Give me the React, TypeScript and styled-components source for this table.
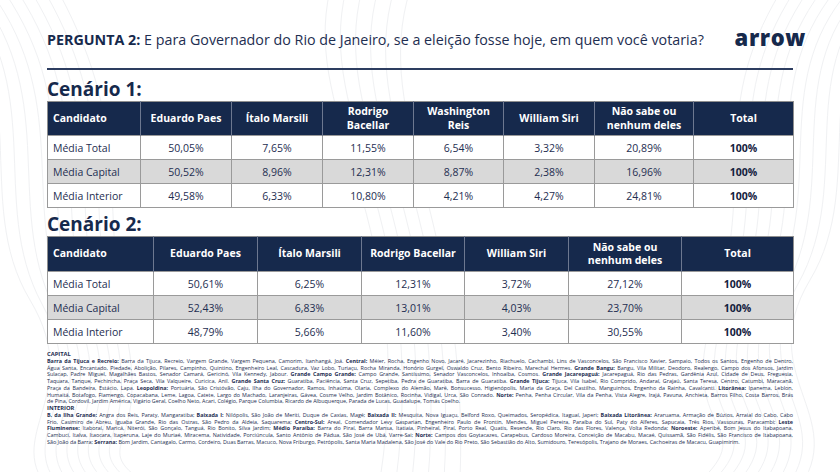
import React from 'react'
import styled, { createGlobalStyle } from 'styled-components'

const GlobalStyle = createGlobalStyle`
  body {
    margin: 0;
    background: #ffffff;
    font-family: "Open Sans", "Liberation Sans", sans-serif;
  }
`;

type Row = { label: string; values: string[] };

const scenario1 = {
  widths: [93, 91, 91, 91, 90, 91, 99, 100],
  headers: ['Candidato', 'Eduardo Paes', 'Ítalo Marsili', 'Rodrigo\nBacellar', 'Washington\nReis', 'William Siri', 'Não sabe ou\nnenhum deles', 'Total'],
  headHeight: 34,
  rows: [
    { label: 'Média Total', values: ['50,05%', '7,65%', '11,55%', '6,54%', '3,32%', '20,89%', '100%'] },
    { label: 'Média Capital', values: ['50,52%', '8,96%', '12,31%', '8,87%', '2,38%', '16,96%', '100%'] },
    { label: 'Média Interior', values: ['49,58%', '6,33%', '10,80%', '4,21%', '4,27%', '24,81%', '100%'] },
  ] as Row[],
};

const scenario2 = {
  widths: [106, 104, 104, 103, 104, 113, 112],
  headers: ['Candidato', 'Eduardo Paes', 'Ítalo Marsili', 'Rodrigo Bacellar', 'William Siri', 'Não sabe ou\nnenhum deles', 'Total'],
  headHeight: 35,
  rows: [
    { label: 'Média Total', values: ['50,61%', '6,25%', '12,31%', '3,72%', '27,12%', '100%'] },
    { label: 'Média Capital', values: ['52,43%', '6,83%', '13,01%', '4,03%', '23,70%', '100%'] },
    { label: 'Média Interior', values: ['48,79%', '5,66%', '11,60%', '3,40%', '30,55%', '100%'] },
  ] as Row[],
};

// each footnote line: pieces alternate regular / bold (bold pieces start with *)
const capitalLines: string[][] = [
  ['*Barra da Tijuca e Recreio:', ' Barra da Tijuca, Recreio, Vargem Grande, Vargem Pequena, Camorim, Itanhangá, Joá. ', '*Central:', ' Méier, Rocha, Engenho Novo, Jacaré, Jacarezinho, Riachuelo, Cachambi, Lins de Vasconcelos, São Francisco Xavier, Sampaio, Todos os Santos, Engenho de Dentro,'],
  ['Água Santa, Encantado, Piedade, Abolição, Pilares, Campinho, Quintino, Engenheiro Leal, Cascadura, Vaz Lobo, Turiaçu, Rocha Miranda, Honório Gurgel, Oswaldo Cruz, Bento Ribeiro, Marechal Hermes. ', '*Grande Bangu:', ' Bangu, Vila Militar, Deodoro, Realengo, Campo dos Afonsos, Jardim'],
  ['Sulacap, Padre Miguel, Magalhães Bastos, Senador Camará, Gericinó, Vila Kennedy, Jabour. ', '*Grande Campo Grande:', ' Campo Grande, Santíssimo, Senador Vasconcelos, Inhoaíba, Cosmos. ', '*Grande Jacarepaguá:', ' Jacarepaguá, Rio das Pedras, Gardênia Azul, Cidade de Deus, Freguesia,'],
  ['Taquara, Tanque, Pechincha, Praça Seca, Vila Valqueire, Curicica, Anil. ', '*Grande Santa Cruz:', ' Guaratiba, Paciência, Santa Cruz, Sepetiba, Pedra de Guaratiba, Barra de Guaratiba. ', '*Grande Tijuca:', ' Tijuca, Vila Isabel, Rio Comprido, Andaraí, Grajaú, Santa Teresa, Centro, Catumbi, Maracanã,'],
  ['Praça da Bandeira, Estácio, Lapa. ', '*Leopoldina:', ' Portuária, São Cristóvão, Caju, Ilha do Governador, Ramos, Inhaúma, Olaria, Complexo do Alemão, Maré, Bonsucesso, Higienópolis, Maria da Graça, Del Castilho, Manguinhos, Engenho da Rainha, Cavalcanti. ', '*Litorânea:', ' Ipanema, Leblon,'],
  ['Humaitá, Botafogo, Flamengo, Copacabana, Leme, Lagoa, Catete, Largo do Machado, Laranjeiras, Gávea, Cosme Velho, Jardim Botânico, Rocinha, Vidigal, Urca, São Conrado. ', '*Norte:', ' Penha, Penha Circular, Vila da Penha, Vista Alegre, Irajá, Pavuna, Anchieta, Barros Filho, Costa Barros, Brás'],
  ['de Pina, Cordovil, Jardim América, Vigário Geral, Coelho Neto, Acari, Colégio, Parque Columbia, Ricardo de Albuquerque, Parada de Lucas, Guadalupe, Tomás Coelho.'],
];

const interiorLines: string[][] = [
  ['*B. da Ilha Grande:', ' Angra dos Reis, Paraty, Mangaratiba; ', '*Baixada I:', ' Nilópolis, São João de Meriti, Duque de Caxias, Magé; ', '*Baixada II:', ' Mesquita, Nova Iguaçu, Belford Roxo, Queimados, Seropédica, Itaguaí, Japeri; ', '*Baixada Litorânea:', ' Araruama, Armação de Búzios, Arraial do Cabo, Cabo'],
  ['Frio, Casimiro de Abreu, Iguaba Grande, Rio das Ostras, São Pedro da Aldeia, Saquarema; ', '*Centro-Sul:', ' Areal, Comendador Levy Gasparian, Engenheiro Paulo de Frontin, Mendes, Miguel Pereira, Paraíba do Sul, Paty do Alferes, Sapucaia, Três Rios, Vassouras, Paracambi; ', '*Leste'],
  ['*Fluminense:', ' Itaboraí, Maricá, Niterói, São Gonçalo, Tanguá, Rio Bonito, Silva Jardim; ', '*Médio Paraíba:', ' Barra do Piraí, Barra Mansa, Itatiaia, Pinheiral, Piraí, Porto Real, Quatis, Resende, Rio Claro, Rio das Flores, Valença, Volta Redonda; ', '*Noroeste:', ' Aperibé, Bom Jesus do Itabapoana,'],
  ['Cambuci, Italva, Itaocara, Itaperuna, Laje do Muriaé, Miracema, Natividade, Porciúncula, Santo Antônio de Pádua, São José de Ubá, Varre-Sai; ', '*Norte:', ' Campos dos Goytacazes, Carapebus, Cardoso Moreira, Conceição de Macabu, Macaé, Quissamã, São Fidélis, São Francisco de Itabapoana,'],
  ['São João da Barra; ', '*Serrana:', ' Bom Jardim, Cantagalo, Carmo, Cordeiro, Duas Barras, Macuco, Nova Friburgo, Petrópolis, Santa Maria Madalena, São José do Vale do Rio Preto, São Sebastião do Alto, Sumidouro, Teresópolis, Trajano de Moraes, Cachoeiras de Macacu, Guapimirim.'],
];

const Contours = () => {
  const rings = [0, 1, 2, 3, 4, 5, 6, 7, 8];
  return (
    <Backdrop width="840" height="472" viewBox="0 0 840 472">
      {rings.map(i => (
        <path key={'l' + i} d={`M ${-60 + i * 14} ${-20} C ${40 + i * 12} ${80 + i * 6}, ${-30 + i * 16} ${200}, ${30 + i * 12} ${300 + i * 4} S ${-10 + i * 10} ${440}, ${60 + i * 14} ${500}`} />
      ))}
      {rings.map(i => (
        <path key={'r' + i} d={`M ${900 - i * 14} ${-20} C ${800 - i * 12} ${60 + i * 6}, ${870 - i * 14} ${180}, ${810 - i * 12} ${280 + i * 4} S ${860 - i * 10} ${420}, ${790 - i * 14} ${500}`} />
      ))}
      {rings.slice(0, 6).map(i => (
        <path key={'c' + i} d={`M ${330 + i * 16} ${-10} C ${300 + i * 14} ${120}, ${420 + i * 10} ${220}, ${380 + i * 16} ${480}`} />
      ))}
    </Backdrop>
  );
};

const DataTable = ({ data }: { data: typeof scenario1 }) => (
  <Table>
    <colgroup>
      {data.widths.map((w, i) => <col key={i} style={{ width: w }} />)}
    </colgroup>
    <thead>
      <HeadRow height={data.headHeight}>
        {data.headers.map((h, i) => (
          <HeadCell key={i} first={i === 0}>
            {h.split('\n').map((part, j) => <div key={j}>{part}</div>)}
          </HeadCell>
        ))}
      </HeadRow>
    </thead>
    <tbody>
      {data.rows.map((r, i) => (
        <BodyRow key={r.label} shaded={i === 1}>
          <Cell first>{r.label}</Cell>
          {r.values.map((v, j) => (
            <Cell key={j} strong={j === r.values.length - 1}>{v}</Cell>
          ))}
        </BodyRow>
      ))}
    </tbody>
  </Table>
);

const NoteLines = ({ lines }: { lines: string[][] }) => (
  <>
    {lines.map((pieces, i) => (
      <NoteLine key={i} last={i === lines.length - 1}>
        {pieces.map((p, j) => p.startsWith('*') ? <b key={j}>{p.slice(1)}</b> : <span key={j}>{p}</span>)}
      </NoteLine>
    ))}
  </>
);

const App = () => (
  <Page>
    <GlobalStyle />
    <Contours />
    <Content>
      <Header>
        <Question><b>PERGUNTA 2:</b> E para Governador do Rio de Janeiro, se a eleição fosse hoje, em quem você votaria?</Question>
        <Logo>arrow</Logo>
      </Header>
      <Rule />
      <ScenarioTitle>Cenário 1:</ScenarioTitle>
      <DataTable data={scenario1} />
      <ScenarioTitle second>Cenário 2:</ScenarioTitle>
      <DataTable data={scenario2} />
      <Notes>
        <NoteHead>CAPITAL</NoteHead>
        <NoteLines lines={capitalLines} />
        <NoteHead>INTERIOR</NoteHead>
        <NoteLines lines={interiorLines} />
      </Notes>
    </Content>
  </Page>
);

export default App;

const navy = '#16294c';
const ink = '#1e2e51';

const Page = styled.div`
  position: relative;
  width: 840px;
  height: 472px;
  overflow: hidden;
  background: #ffffff;
`;

const Backdrop = styled.svg`
  position: absolute;
  top: 0;
  left: 0;
  fill: none;
  stroke: #f0f1f3;
  stroke-width: 1;
`;

const Content = styled.div`
  position: relative;
  padding: 0 47px;
  display: flex;
  flex-direction: column;
`;

const Header = styled.div`
  display: flex;
  align-items: center;
  justify-content: space-between;
  height: 40px;
  margin-top: 19px;
`;

const Question = styled.div`
  font-size: 14.3px;
  color: ${ink};
  white-space: nowrap;
  b {
    font-weight: 700;
    color: ${navy};
  }
`;

const Logo = styled.div`
  font-family: "Open Sans", sans-serif;
  font-weight: 800;
  font-size: 22px;
  line-height: 22px;
  letter-spacing: 0.6px;
  color: ${navy};
  margin-right: -13px;
  margin-top: -4px;
`;

const Rule = styled.div`
  height: 2px;
  background: #2d3d60;
  margin-top: 9px;
`;

const ScenarioTitle = styled.div<{ second?: boolean }>`
  font-size: 19px;
  font-weight: 700;
  color: ${navy};
  line-height: 22px;
  margin-top: ${p => (p.second ? '5px' : '8px')};
  margin-bottom: 1px;
`;

const Table = styled.table`
  width: 746px;
  table-layout: fixed;
  border-collapse: collapse;
  border: 1px solid #8f8f8f;
`;

const HeadRow = styled.tr<{ height: number }>`
  height: ${p => p.height}px;
  background: ${navy};
`;

const HeadCell = styled.th<{ first?: boolean }>`
  padding: 0 4px 0 ${p => (p.first ? '5px' : '4px')};
  text-align: ${p => (p.first ? 'left' : 'center')};
  font-size: 10.5px;
  line-height: 13.5px;
  font-weight: 700;
  color: #ffffff;
  border-left: 1px solid #6d7890;
  &:first-child {
    border-left: none;
  }
`;

const BodyRow = styled.tr<{ shaded?: boolean }>`
  height: 24px;
  background: ${p => (p.shaded ? '#d9d9d9' : '#ffffff')};
`;

const Cell = styled.td<{ first?: boolean; strong?: boolean }>`
  padding: 0 4px 0 ${p => (p.first ? '5px' : '4px')};
  text-align: ${p => (p.first ? 'left' : 'center')};
  font-size: 10.5px;
  color: ${p => (p.strong ? '#14213d' : ink)};
  font-weight: ${p => (p.strong ? 700 : 400)};
  border: 1px solid #9a9a9a;
`;

const Notes = styled.div`
  margin-top: 7px;
  font-size: 5.4px;
  line-height: 6.75px;
  color: ${ink};
`;

const NoteHead = styled.div`
  font-weight: 700;
  font-size: 5.8px;
`;

const NoteLine = styled.div<{ last?: boolean }>`
  white-space: nowrap;
  text-align: justify;
  text-align-last: ${p => (p.last ? 'left' : 'justify')};
  b {
    font-weight: 700;
  }
`;
